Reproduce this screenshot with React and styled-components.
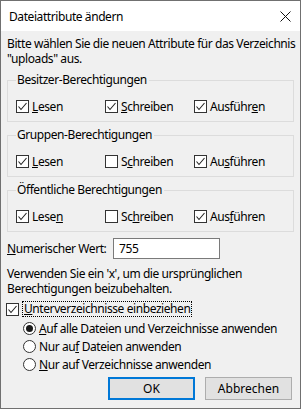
import styled, { createGlobalStyle } from "styled-components"

const Global = createGlobalStyle`
    html, body {
        margin: 0;
        padding: 0;
        background: #ffffff;
    }
    body {
        font-family: "Segoe UI", "Noto Sans", sans-serif;
        font-size: 12px;
        letter-spacing: -0.42px;
        color: #000000;
        white-space: nowrap;
    }
`

const groups = [
    {
        title: "Besitzer-Berechtigungen",
        items: [
            { pre: "", key: "L", post: "esen", checked: true },
            { pre: "", key: "S", post: "chreiben", checked: true },
            { pre: "Ausführ", key: "e", post: "n", checked: true },
        ],
    },
    {
        title: "Gruppen-Berechtigungen",
        items: [
            { pre: "", key: "L", post: "esen", checked: true },
            { pre: "S", key: "c", post: "hreiben", checked: false },
            { pre: "Au", key: "s", post: "führen", checked: true },
        ],
    },
    {
        title: "Öffentliche Berechtigungen",
        items: [
            { pre: "Lese", key: "n", post: "", checked: true },
            { pre: "Sc", key: "h", post: "reiben", checked: false },
            { pre: "Aus", key: "f", post: "ühren", checked: true },
        ],
    },
]

const radios = [
    { pre: "", key: "A", post: "uf alle Dateien und Verzeichnisse anwenden", selected: true },
    { pre: "Nur au", key: "f", post: " Dateien anwenden", selected: false },
    { pre: "", key: "N", post: "ur auf Verzeichnisse anwenden", selected: false },
]

function CheckBox({ checked }) {
    return (
        <Box>
            {checked && (
                <svg width="11" height="11" viewBox="0 0 11 11">
                    <polyline points="1.5,5.5 4,8.5 9.5,2" fill="none" stroke="#222" strokeWidth="1.1" />
                </svg>
            )}
        </Box>
    )
}

function Label({ pre, k, post }) {
    return (
        <span>
            {pre}
            <u>{k}</u>
            {post}
        </span>
    )
}

export default function App() {
    return (
        <>
            <Global />
            <Window>
                <TitleBar>
                    <span>Dateiattribute ändern</span>
                    <svg width="11" height="11" viewBox="0 0 11 11">
                        <path d="M0.5 0.5 L10.5 10.5 M10.5 0.5 L0.5 10.5" stroke="#111" strokeWidth="1" />
                    </svg>
                </TitleBar>
                <Body>
                    <Text>
                        Bitte wählen Sie die neuen Attribute für das Verzeichnis
                        <br />
                        "uploads" aus.
                    </Text>
                    {groups.map((g) => (
                        <Group key={g.title}>
                            <Legend>{g.title}</Legend>
                            <CheckRow>
                                {g.items.map((it, i) => (
                                    <Check key={i}>
                                        <CheckBox checked={it.checked} />
                                        <Label pre={it.pre} k={it.key} post={it.post} />
                                    </Check>
                                ))}
                            </CheckRow>
                        </Group>
                    ))}
                    <NumRow>
                        <Label pre="" k="N" post="umerischer Wert:" />
                        <Input>755</Input>
                    </NumRow>
                    <Hint>
                        Verwenden Sie ein 'x', um die ursprünglichen
                        <br />
                        Berechtigungen beizubehalten.
                    </Hint>
                    <SubCheck>
                        <CheckBox checked />
                        <Focus>
                            <Label pre="" k="U" post="nterverzeichnisse einbeziehen" />
                        </Focus>
                    </SubCheck>
                    <RadioList>
                        {radios.map((r, i) => (
                            <RadioRow key={i}>
                                <Radio $on={r.selected} />
                                <Label pre={r.pre} k={r.key} post={r.post} />
                            </RadioRow>
                        ))}
                    </RadioList>
                    <Buttons>
                        <Button $default>OK</Button>
                        <Button>Abbrechen</Button>
                    </Buttons>
                </Body>
            </Window>
        </>
    )
}

const Window = styled.div`
    width: 301px;
    height: 409px;
    box-sizing: border-box;
    border: 1px solid #707070;
    display: flex;
    flex-direction: column;
    background: #f0f0f0;
`

const TitleBar = styled.div`
    height: 30px;
    flex-shrink: 0;
    background: #ffffff;
    display: flex;
    align-items: center;
    justify-content: space-between;
    padding: 0 9px 0 8px;
    svg {
        display: block;
    }
`

const Body = styled.div`
    flex: 1;
    padding: 5px 6px 0 6px;
    display: flex;
    flex-direction: column;
`

const Text = styled.div`
    line-height: 15px;
    margin-bottom: 7px;
`

const Group = styled.fieldset`
    margin: 0 0 6px 0;
    padding: 11px 0 7px 8px;
    border: 1px solid #dcdcdc;
    min-width: 0;
`

const Legend = styled.legend`
    padding: 0 2px 0 1px;
    margin-left: 0;
    line-height: 14px;
`

const CheckRow = styled.div`
    display: grid;
    grid-template-columns: 89px 89px auto;
`

const Check = styled.label`
    display: flex;
    align-items: center;
    gap: 3px;
    height: 16px;
`

const Box = styled.span`
    width: 13px;
    height: 13px;
    box-sizing: border-box;
    border: 1px solid #333333;
    background: #ffffff;
    display: flex;
    align-items: center;
    justify-content: center;
    flex-shrink: 0;
`

const NumRow = styled.div`
    display: grid;
    grid-template-columns: 106px 107px;
    align-items: center;
`

const Input = styled.div`
    height: 21px;
    box-sizing: border-box;
    border: 1px solid #7a7a7a;
    background: #ffffff;
    padding-left: 5px;
    line-height: 19px;
`

const Hint = styled.div`
    line-height: 15px;
    margin-top: 7px;
`

const SubCheck = styled.label`
    display: flex;
    align-items: center;
    gap: 3px;
    margin-top: 5px;
    margin-left: -1px;
`

const Focus = styled.span`
    border: 1px dotted #000000;
    padding: 0 1px;
    line-height: 14px;
`

const RadioList = styled.div`
    display: flex;
    flex-direction: column;
    padding-left: 16px;
    margin-top: 2px;
`

const RadioRow = styled.label`
    display: flex;
    align-items: center;
    gap: 3px;
    height: 18px;
`

const Radio = styled.span`
    width: 13px;
    height: 13px;
    box-sizing: border-box;
    border: 1px solid #333333;
    border-radius: 50%;
    background: #ffffff;
    display: flex;
    align-items: center;
    justify-content: center;
    flex-shrink: 0;
    &::after {
        content: "";
        width: 7px;
        height: 7px;
        border-radius: 50%;
        background: ${(p) => (p.$on ? "#1a1a1a" : "transparent")};
    }
`

const Buttons = styled.div`
    display: flex;
    justify-content: flex-end;
    gap: 10px;
    margin-top: 4px;
    padding-right: 2px;
`

const Button = styled.button`
    font: inherit;
    color: #000000;
    height: 23px;
    width: 87px;
    background: #e1e1e1;
    border: ${(p) => (p.$default ? "2px solid #0078d7" : "1px solid #adadad")};
    padding: 0;
`
